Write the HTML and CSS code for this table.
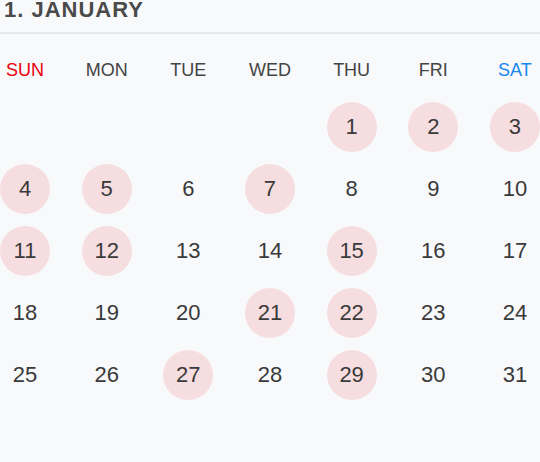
FILE: index.html
```html
<!DOCTYPE html>
<html>
<head>
<meta charset="utf-8">
<link rel="stylesheet" href="styles.css">
</head>
<body>
<div class="cal">
  <div class="cal-title">1. JANUARY</div>
  <div class="week">
    <div class="wd sun">SUN</div>
    <div class="wd">MON</div>
    <div class="wd">TUE</div>
    <div class="wd">WED</div>
    <div class="wd">THU</div>
    <div class="wd">FRI</div>
    <div class="wd sat">SAT</div>
  </div>
  <div class="days">
    <div class="day"></div><div class="day"></div><div class="day"></div><div class="day"></div>
    <div class="day hl">1</div><div class="day hl">2</div><div class="day hl">3</div>
    <div class="day hl">4</div><div class="day hl">5</div><div class="day">6</div><div class="day hl">7</div><div class="day">8</div><div class="day">9</div><div class="day">10</div>
    <div class="day hl">11</div><div class="day hl">12</div><div class="day">13</div><div class="day">14</div><div class="day hl">15</div><div class="day">16</div><div class="day">17</div>
    <div class="day">18</div><div class="day">19</div><div class="day">20</div><div class="day hl">21</div><div class="day hl">22</div><div class="day">23</div><div class="day">24</div>
    <div class="day">25</div><div class="day">26</div><div class="day hl">27</div><div class="day">28</div><div class="day hl">29</div><div class="day">30</div><div class="day">31</div>
  </div>
</div>
</body>
</html>
```
FILE: styles.css
```css
html, body {
  margin: 0;
  padding: 0;
  background: #f8f9fb;
}
body {
  font-family: "Liberation Sans", Arial, sans-serif;
  width: 540px;
  height: 462px;
  overflow: hidden;
}
.cal-title {
  font-size: 22px;
  font-weight: bold;
  line-height: 20px;
  letter-spacing: 1px;
  color: #4a4a4a;
  padding: 0 0 12px 4px;
  border-bottom: 2px solid #e7e8ea;
}
.week, .days {
  display: grid;
  grid-template-columns: repeat(7, 50px);
  justify-content: space-between;
}
.week {
  margin-top: 24px;
}
.wd {
  text-align: center;
  font-size: 18px;
  line-height: 24px;
  color: #444;
}
.wd.sun { color: #e8000b; }
.wd.sat { color: #1688f0; }
.days {
  margin-top: 20px;
  row-gap: 12px;
}
.day {
  width: 50px;
  height: 50px;
  border-radius: 50%;
  display: flex;
  align-items: center;
  justify-content: center;
  font-size: 22px;
  color: #3a3a3a;
}
.day.hl { background: #f6dde0; }
```
